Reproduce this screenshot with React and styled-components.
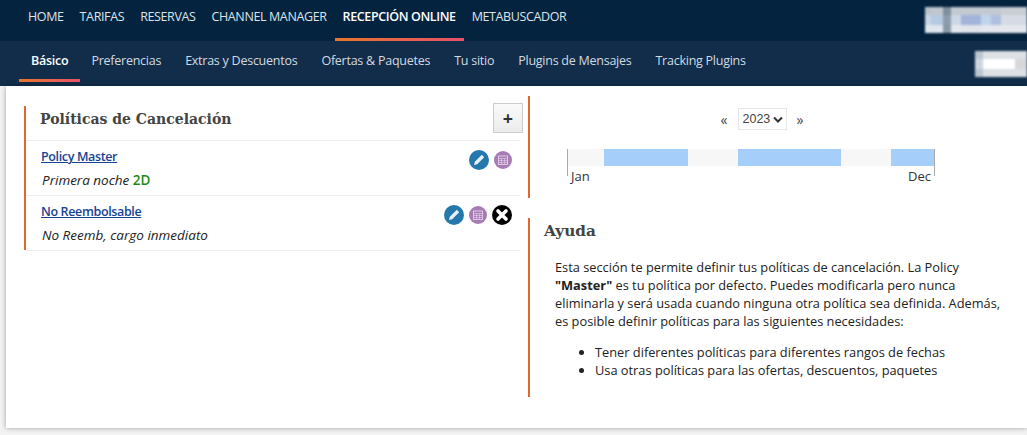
import React from "react";
import styled, { createGlobalStyle } from "styled-components";

const Global = createGlobalStyle`
  html, body { margin: 0; padding: 0; height: 435px; overflow: hidden; background: #f3f3f3; }
  body { font-family: "Open Sans", "Liberation Sans", sans-serif; font-size: 13px; color: #222; }
  * { box-sizing: border-box; }
`;

const TopBar = styled.nav`
  height: 41px; background: #04233f; display: flex; align-items: stretch; justify-content: space-between; padding-left: 20px;
`;
const TopList = styled.div`display: flex; gap: 0;`;
const TopItem = styled.a`
  height: 41px; padding: 0 8px; display: flex; align-items: center; padding-bottom: 5px;
  font-size: 12.5px; letter-spacing: -0.38px; white-space: nowrap;
  color: ${p => (p.$active ? "#fff" : "#dde3e9")}; font-weight: ${p => (p.$active ? 600 : 400)};
  border-bottom: 3px solid transparent;
  ${p => p.$active && `border-image: linear-gradient(90deg,#e8762a,#e8506c) 1;`}
`;
const SubBar = styled.nav`
  height: 45px; background: #112d4a; display: flex; align-items: stretch; justify-content: space-between; padding-left: 19px;
`;
const SubList = styled.div`display: flex; gap: 0;`;
const SubItem = styled.a`
  height: 41px; padding: 0 12px; display: flex; align-items: center; white-space: nowrap;
  font-size: 12.5px; letter-spacing: -0.25px; margin-right: ${p => (p.$active ? "-1px" : "0")};
  color: ${p => (p.$active ? "#fff" : "#d3dae1")}; font-weight: ${p => (p.$active ? 600 : 400)};
  border-bottom: 3px solid transparent;
  ${p => p.$active && `border-image: linear-gradient(90deg,#e8762a,#e8506c) 1;`}
`;
const Redacted = styled.div`
  display: flex; align-items: stretch; height: 26px; filter: blur(1px); overflow: hidden; margin-top: ${p => p.$top}px; width: ${p => p.$w}px;
`;
const Pixel = styled.span`display: block; flex: ${p => p.$g} 0 0; background: ${p => p.$c};`;

const Panel = styled.main`
  margin-left: 6px; height: 342px; background: #fff; box-shadow: 0 0 5px rgba(0,0,0,.35);
  display: grid; grid-template-columns: 522px 1fr; padding-top: 10px;
`;
const LeftCol = styled.section`padding: 10px 5px 0 18px;`;
const PoliciesBox = styled.div`border-left: 2px solid #e2682f; height: 144px;`;
const PoliciesHead = styled.header`
  height: 34px; display: flex; align-items: flex-start; justify-content: space-between; padding-left: 14px;
`;
const Title = styled.h2`
  margin: 0; font-family: "DejaVu Serif", serif; font-weight: 700; font-size: 14px; line-height: 26px; color: #444;
`;
const AddButton = styled.button`
  width: 30px; height: 30px; margin-top: -3px; padding: 0; border: 1px solid #ccc; background: linear-gradient(#fafafa,#ececec);
  font: 700 18px/1 "Open Sans", sans-serif; color: #333; display: flex; align-items: center; justify-content: center;
`;
const Row = styled.article`
  height: 55px; margin-right: 3px; border-top: 1px solid #efefef; padding: 7px 8px 0 15px; display: flex; justify-content: space-between;
  &:last-child { border-bottom: 1px solid #efefef; height: 56px; }
`;
const RowText = styled.div`display: flex; flex-direction: column; gap: 5px;`;
const RowLink = styled.a`
  color: #164492; text-decoration: underline; font-size: 12.5px; letter-spacing: -0.36px; line-height: 18px; font-weight: 600;
`;
const RowNote = styled.div`font-style: italic; font-size: 13.5px; line-height: 18px; color: #222; padding-left: 1px;`;
const Green = styled.b`font-style: normal; font-weight: 600; color: #1d8a14;`;
const Actions = styled.div`display: flex; gap: 5px; align-items: center; height: 20px; margin-top: 2px;`;
const IconDisc = styled.span`
  width: ${p => p.$s}px; height: ${p => p.$s}px; border-radius: 50%; background: ${p => p.$c}; display: flex; align-items: center; justify-content: center;
`;

const RightCol = styled.section`display: flex; flex-direction: column;`;
const CalendarBox = styled.div`border-left: 2px solid #e2682f; height: 102px; padding-top: 11px; padding-left: 37px;`;
const Pager = styled.div`
  display: flex; align-items: center; justify-content: center; gap: 10px; width: 368px; padding-left: 22px; height: 24px; color: #444; font-size: 14px;
`;
const YearSelect = styled.select`
  appearance: none; font: 12.5px "Liberation Sans", sans-serif; color: #444; height: 22px; width: 49px; border: 1px solid #e6e6e6; padding: 0 0 0 4px; border-radius: 0;
  background: #fff url("data:image/svg+xml,%3Csvg xmlns='http://www.w3.org/2000/svg' width='10' height='7'%3E%3Cpath d='M1 1.5l4 4 4-4' fill='none' stroke='%23333' stroke-width='2'/%3E%3C/svg%3E") no-repeat right 3px center;
`;
const Timeline = styled.div`
  margin-top: 18px; width: 368px; height: 27px; border-left: 1px solid #aaa; border-right: 1px solid #aaa;
`;
const Bar = styled.div`display: flex; height: 17px; background: #f7f7f7;`;
const Segment = styled.span`display: block; flex: ${p => p.$w} 0 0; background: ${p => (p.$on ? "#a5cefb" : "transparent")};`;
const Months = styled.div`display: flex; justify-content: space-between; padding: 1px 3px 0 3px; font-size: 13px; line-height: 18px; color: #333;`;

const HelpBox = styled.div`
  border-left: 2px solid #e2682f; margin-top: 20px; height: 179px; padding-left: 14px;
`;
const HelpTitle = styled.h3`
  margin: 0; font-family: "DejaVu Serif", serif; font-weight: 700; font-size: 15.3px; color: #444; line-height: 26px;
`;
const HelpBody = styled.div`padding: 14px 0 0 11px; width: 462px; font-size: 12.8px; line-height: 18px; color: #222;`;
const HelpPara = styled.p`margin: 0;`;
const HelpList = styled.ul`margin: 13px 0 0; padding-left: 40px;`;

const Pencil = () => (
  <svg width="14" height="14" viewBox="0 0 14 14"><path d="M2 12 L2.8 8.8 L9.8 1.8 L12.2 4.2 L5.2 11.2 Z" fill="#e8f1f7" /></svg>
);
const Cal = () => (
  <svg width="12" height="12" viewBox="0 0 12 12" fill="none" stroke="#dcc9e5" strokeWidth="1">
    <rect x="1.5" y="2" width="9" height="8.5" />
    <path d="M1.5 4.5h9M1.5 6.5h9M1.5 8.5h9M4.5 4.5v6M7.5 4.5v6" strokeWidth=".7" />
  </svg>
);
const Cross = () => (
  <svg width="14" height="14" viewBox="0 0 14 14"><path d="M3 3 L11 11 M11 3 L3 11" stroke="#fff" strokeWidth="3.6" strokeLinecap="round" /></svg>
);

const top = ["HOME", "TARIFAS", "RESERVAS", "CHANNEL MANAGER", "RECEPCIÓN ONLINE", "METABUSCADOR"];
const sub = ["Básico", "Preferencias", "Extras y Descuentos", "Ofertas & Paquetes", "Tu sitio", "Plugins de Mensajes", "Tracking Plugins"];
const segments = [[36, 0], [84, 1], [50, 0], [103, 1], [50, 0], [43, 1]];
const band = (a, b, c) => `linear-gradient(${a} 0 30%, ${b} 30% 70%, ${c} 70% 100%)`;
const redactTop = [
  [6, band("#bcc3cc", "#c9d6e6", "#e2e7ee")],
  [12, band("#c0c7cf", "#b4c9e2", "#dfe6ee")],
  [8, band("#7f8e9e", "#8d9cab", "#8a99a8")],
  [10, band("#c3c9d1", "#ccd8e6", "#e4e8ee")],
  [20, band("#c3c9d1", "#a2b4da", "#e0e5ec")],
  [10, band("#c3c9d1", "#c0d4ea", "#e4e8ee")],
  [10, band("#c3c9d1", "#afbfe0", "#e4e8ee")],
  [26, band("#c9ced5", "#d4dbe4", "#e4e8ee")],
];
const redactSub = [
  [8, band("#bcc6cf", "#cdd6de", "#bcc6cf")],
  [32, band("#dde1e6", "#ffffff", "#dde1e6")],
  [12, band("#dde1e6", "#d6d8da", "#dde1e6")],
];

export default function App() {
  return (
    <>
      <Global />
      <TopBar>
        <TopList>
          {top.map(t => <TopItem key={t} $active={t === "RECEPCIÓN ONLINE"}>{t}</TopItem>)}
        </TopList>
        <Redacted $top={7} $w={102}>{redactTop.map(([g, c], i) => <Pixel key={i} $g={g} $c={c} />)}</Redacted>
      </TopBar>
      <SubBar>
        <SubList>
          {sub.map(t => <SubItem key={t} $active={t === "Básico"}>{t}</SubItem>)}
        </SubList>
        <Redacted $top={10} $w={52}>{redactSub.map(([g, c], i) => <Pixel key={i} $g={g} $c={c} />)}</Redacted>
      </SubBar>
      <Panel>
        <LeftCol>
          <PoliciesBox>
            <PoliciesHead>
              <Title>Políticas de Cancelación</Title>
              <AddButton>+</AddButton>
            </PoliciesHead>
            <Row>
              <RowText>
                <RowLink>Policy Master</RowLink>
                <RowNote>Primera noche <Green>2D</Green></RowNote>
              </RowText>
              <Actions>
                <IconDisc $s={20} $c="#2478ab"><Pencil /></IconDisc>
                <IconDisc $s={18} $c="#a77cb5"><Cal /></IconDisc>
              </Actions>
            </Row>
            <Row>
              <RowText>
                <RowLink>No Reembolsable</RowLink>
                <RowNote>No Reemb, cargo inmediato</RowNote>
              </RowText>
              <Actions>
                <IconDisc $s={20} $c="#2478ab"><Pencil /></IconDisc>
                <IconDisc $s={18} $c="#a77cb5"><Cal /></IconDisc>
                <IconDisc $s={20} $c="#000"><Cross /></IconDisc>
              </Actions>
            </Row>
          </PoliciesBox>
        </LeftCol>
        <RightCol>
          <CalendarBox>
            <Pager>
              <span>«</span>
              <YearSelect defaultValue="2023"><option>2023</option></YearSelect>
              <span>»</span>
            </Pager>
            <Timeline>
              <Bar>{segments.map(([w, on], i) => <Segment key={i} $w={w} $on={on} />)}</Bar>
              <Months><span>Jan</span><span>Dec</span></Months>
            </Timeline>
          </CalendarBox>
          <HelpBox>
            <HelpTitle>Ayuda</HelpTitle>
            <HelpBody>
              <HelpPara>
                Esta sección te permite definir tus políticas de cancelación. La Policy <b>"Master"</b> es tu política por defecto. Puedes modificarla pero nunca eliminarla y será usada cuando ninguna otra política sea definida. Además, es posible definir políticas para las siguientes necesidades:
              </HelpPara>
              <HelpList>
                <li>Tener diferentes políticas para diferentes rangos de fechas</li>
                <li>Usa otras políticas para las ofertas, descuentos, paquetes</li>
              </HelpList>
            </HelpBody>
          </HelpBox>
        </RightCol>
      </Panel>
    </>
  );
}
